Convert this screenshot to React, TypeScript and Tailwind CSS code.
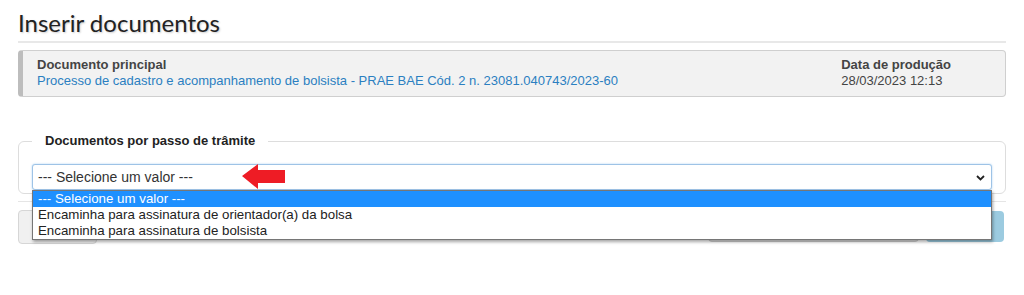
import React from 'react';

const opcoes = [
  '--- Selecione um valor ---',
  'Encaminha para assinatura de orientador(a) da bolsa',
  'Encaminha para assinatura de bolsista',
];

const App = () => {
  return (
    <div className="w-[1024px] h-[295px] bg-white px-[18px] font-['Liberation_Sans',Arial,sans-serif] text-[13px] text-[#333]">
      {/* titulo */}
      <h1 className="pt-[8px] pb-[3px] border-b-2 border-[#e8e8e8] font-['Lato',sans-serif] text-[24px] leading-[30px] text-[#222] [text-shadow:1px_1px_2px_rgba(0,0,0,0.2)]">
        Inserir documentos
      </h1>

      {/* documento principal */}
      <div className="mt-[7px] h-[47px] flex justify-between rounded-[4px] border border-[#cfcfcf] border-l-[5px] border-l-[#bdbdbd] bg-[#f2f2f2] pl-[14px] pr-[54px] pt-[6px] leading-[16px] text-[13px]">
        <div>
          <div className="font-bold text-[#444]">Documento principal</div>
          <div className="text-[#2b7fc1]">
            Processo de cadastro e acompanhamento de bolsista - PRAE BAE Cód. 2 n. 23081.040743/2023-60
          </div>
        </div>
        <div>
          <div className="font-bold text-[#444]">Data de produção</div>
          <div className="text-[#444]">28/03/2023 12:13</div>
        </div>
      </div>

      {/* fieldset */}
      <fieldset className="mt-[36px] h-[61px] rounded-[6px] border border-[#dddddd] px-[13px]">
        <legend className="px-[13px] font-bold text-[13px] text-[#222] leading-[16px]">
          Documentos por passo de trâmite
        </legend>
        <div className="relative mt-[15px]">
          <div className="h-[26px] flex items-center justify-between rounded-[3px] border border-[#9ec3e6] shadow-[0_0_2px_rgba(102,175,233,0.6)] bg-white pl-[5px] pr-[6px] text-[14px] text-[#333]">
            <span>--- Selecione um valor ---</span>
            <svg width="9" height="6" viewBox="0 0 9 6" className="mt-[1px]">
              <path d="M1 1l3.5 3.5L8 1" fill="none" stroke="#222" strokeWidth="1.8" />
            </svg>
          </div>

          {/* seta vermelha */}
          <svg width="46" height="26" viewBox="0 0 46 26" className="absolute left-[210px] top-0">
            <path d="M0 12 L16 0 L16 6 L43 6 L43 19 L16 19 L16 25 Z" fill="#ee1c25" />
          </svg>

          {/* lista aberta */}
          <ul className="absolute left-0 right-0 top-[26px] z-10 border border-[#767676] bg-white shadow-[1px_2px_3px_rgba(0,0,0,0.35)] text-[13.3px] leading-[16px] text-[#222]">
            {opcoes.map((o, i) => (
              <li key={o} className={i === 0 ? 'bg-[#1e90ff] text-white pl-[5px]' : 'pl-[5px]'}>
                {o}
              </li>
            ))}
          </ul>
        </div>
      </fieldset>

      {/* rodape */}
      <div className="mt-[7px] border-t border-[#e5e5e5] pt-[8px] flex justify-between">
        <button className="w-[79px] h-[34px] rounded-[4px] border border-[#d6d6d6] bg-[#f0f0f0]" />
        <div className="flex gap-[7px]">
          <button className="w-[211px] h-[32px] rounded-[4px] border border-[#cccccc] bg-[#e0e0e0]" />
          <button className="w-[78px] h-[31px] mt-[1px] rounded-[4px] bg-[#9ccbe0] mr-[2px]" />
        </div>
      </div>
    </div>
  );
};

export default App;
